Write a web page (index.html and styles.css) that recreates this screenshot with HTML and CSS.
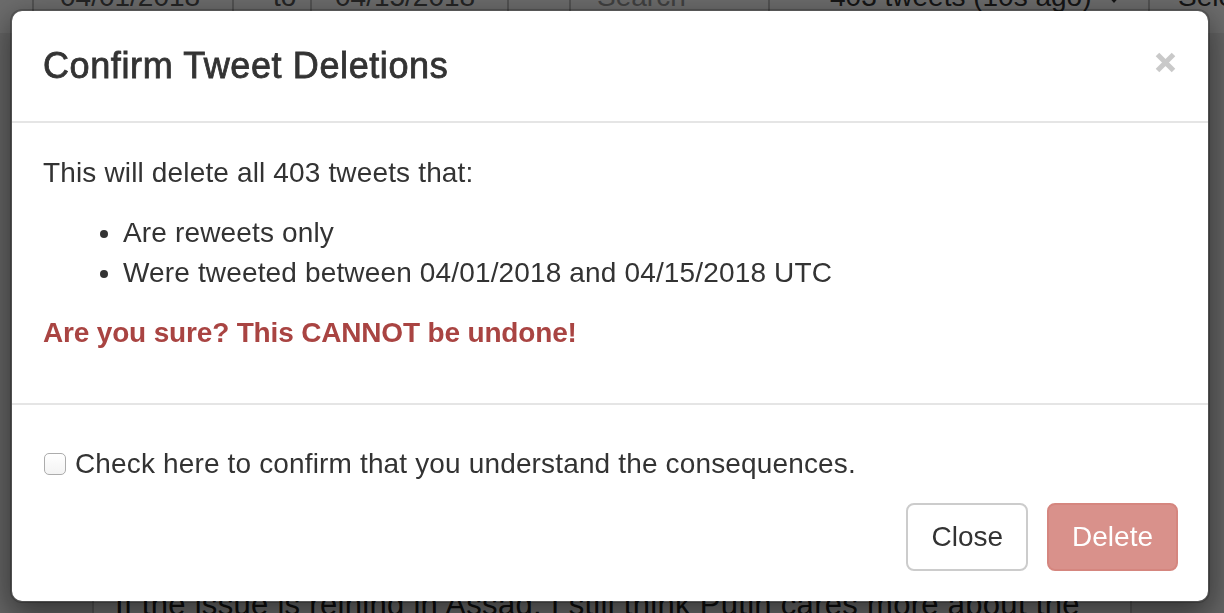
FILE: index.html
```html
<!DOCTYPE html>
<html lang="en">
<head>
<meta charset="utf-8">
<title>Confirm Tweet Deletions</title>
<link rel="stylesheet" href="styles.css">
</head>
<body>
<div class="page">
  <div class="toolbar">
    <div class="cell cell-lead"></div>
    <div class="cell cell-date">04/01/2018</div>
    <div class="cell cell-to">to</div>
    <div class="cell cell-date2">04/15/2018</div>
    <div class="cell cell-gap"></div>
    <div class="cell cell-search">Search</div>
    <div class="cell cell-count">403 tweets (10s ago) <span class="caret"></span></div>
    <div class="cell cell-select">Select</div>
  </div>
  <div class="tweet">
    <p class="tweet-text">If the issue is reining in Assad, I still think Putin cares more about the outcome than we do.</p>
  </div>
</div>

<div class="backdrop">
  <div class="modal">
    <div class="modal-header">
      <h4 class="modal-title">Confirm Tweet Deletions</h4>
      <button class="close" type="button" aria-label="Close">
        <svg width="21" height="21" viewBox="0 0 21 21"><path d="M2.5 2.5 L18.5 18.5 M18.5 2.5 L2.5 18.5" stroke="#c9c9c9" stroke-width="5" fill="none"/></svg>
      </button>
    </div>
    <div class="modal-body">
      <p>This will delete all 403 tweets that:</p>
      <ul class="criteria">
        <li>Are reweets only</li>
        <li>Were tweeted between 04/01/2018 and 04/15/2018 UTC</li>
      </ul>
      <p class="danger">Are you sure? This CANNOT be undone!</p>
    </div>
    <div class="modal-footer">
      <label class="confirm"><input type="checkbox" class="check"> Check here to confirm that you understand the consequences.</label>
      <div class="actions">
        <button class="btn btn-default" type="button">Close</button>
        <button class="btn btn-danger" type="button" disabled>Delete</button>
      </div>
    </div>
  </div>
</div>
</body>
</html>
```

FILE: styles.css
```css
html, body {
  margin: 0;
  padding: 0;
  height: 100%;
  overflow: hidden;
}

body {
  background: #ececec;
  font-family: "Liberation Sans", Arial, Helvetica, sans-serif;
  color: #333;
}

.page {
  width: 1224px;
}

.toolbar {
  display: flex;
  margin-top: -35px;
  height: 68px;
  background: #fff;
  font-size: 28px;
  line-height: 40px;
  color: #555;
}

.cell {
  box-sizing: border-box;
  height: 68px;
  padding: 12px 0;
  border-right: 2px solid #c4c4c4;
  white-space: nowrap;
  overflow: hidden;
}

.cell-lead { width: 34px; }
.cell-date { width: 200px; padding-left: 26px; }
.cell-to { width: 78px; padding-left: 39px; }
.cell-date2 { width: 197px; padding-left: 23px; }
.cell-gap { width: 62px; }
.cell-search { width: 199px; padding-left: 26px; color: #999; }
.cell-count { width: 380px; padding-left: 60px; color: #333; }
.cell-select { flex: 1; padding-left: 28px; border-right: 0; color: #333; }

.caret {
  display: inline-block;
  width: 0;
  height: 0;
  margin-left: 8px;
  vertical-align: middle;
  border-top: 8px solid #333;
  border-left: 7px solid transparent;
  border-right: 7px solid transparent;
}

.tweet {
  box-sizing: border-box;
  margin: 551px 0 0 92px;
  width: 1040px;
  padding: 0 30px 0 21px;
  background: #fff;
  border-left: 2px solid #c8c8c8;
  border-right: 2px solid #c8c8c8;
  height: 200px;
}

.tweet-text {
  margin: 0;
  font-size: 31px;
  line-height: 42px;
  letter-spacing: 0.3px;
  color: #222;
}

/* Overlay */
.backdrop {
  position: fixed;
  inset: 0;
  background: rgba(0, 0, 0, 0.58);
  padding: 9px 0 0 10px;
}

.modal {
  box-sizing: border-box;
  width: 1200px;
  background: #fff;
  background-clip: padding-box;
  border: 2px solid rgba(0, 0, 0, 0.2);
  border-radius: 12px;
  box-shadow: 0 10px 30px rgba(0, 0, 0, 0.5);
  color: #333;
}

.modal-header {
  display: flex;
  justify-content: space-between;
  align-items: flex-start;
  padding: 30px;
  border-bottom: 2px solid #e5e5e5;
}

.modal-title {
  margin: 0 0 0 1px;
  font-size: 36px;
  line-height: 50px;
  font-weight: 400;
  letter-spacing: 0.6px;
  -webkit-text-stroke: 0.8px #333;
  color: #333;
}

.close {
  appearance: none;
  border: 0;
  background: none;
  padding: 0;
  width: 21px;
  height: 21px;
  margin: 11px 2px 0 0;
  cursor: pointer;
}

.close svg {
  display: block;
}

.modal-body {
  padding: 30px;
  font-size: 28px;
  line-height: 40px;
  letter-spacing: 0.15px;
}

.modal-body p {
  margin: 0 0 20px 1px;
}

.criteria {
  margin: 0 0 20px;
  padding-left: 81px;
}

.danger {
  color: #a94442;
  font-weight: bold;
  letter-spacing: -0.17px;
}

.modal-footer {
  padding: 30px;
  border-top: 2px solid #e5e5e5;
}

.confirm {
  display: flex;
  align-items: center;
  margin: 9px 0 19px;
  font-size: 28px;
  line-height: 40px;
  letter-spacing: 0.15px;
  color: #333;
}

.check {
  appearance: none;
  -webkit-appearance: none;
  box-sizing: border-box;
  width: 22px;
  height: 22px;
  margin: 0 9px 0 2px;
  border: 1.5px solid #acacac;
  border-radius: 5px;
  background: linear-gradient(#ffffff, #f3f3f3);
  flex: none;
}

.actions {
  display: flex;
  justify-content: flex-end;
  gap: 19px;
}

.btn {
  font-family: "Liberation Sans", Arial, Helvetica, sans-serif;
  font-size: 28px;
  line-height: 40px;
  padding: 12px 23px;
  border: 2px solid transparent;
  border-radius: 8px;
}

.btn-default {
  background: #fff;
  border-color: #cccccc;
  color: #333;
}

.btn-danger {
  background: #d9918b;
  border-color: #d5867f;
  color: #fff;
}
```
